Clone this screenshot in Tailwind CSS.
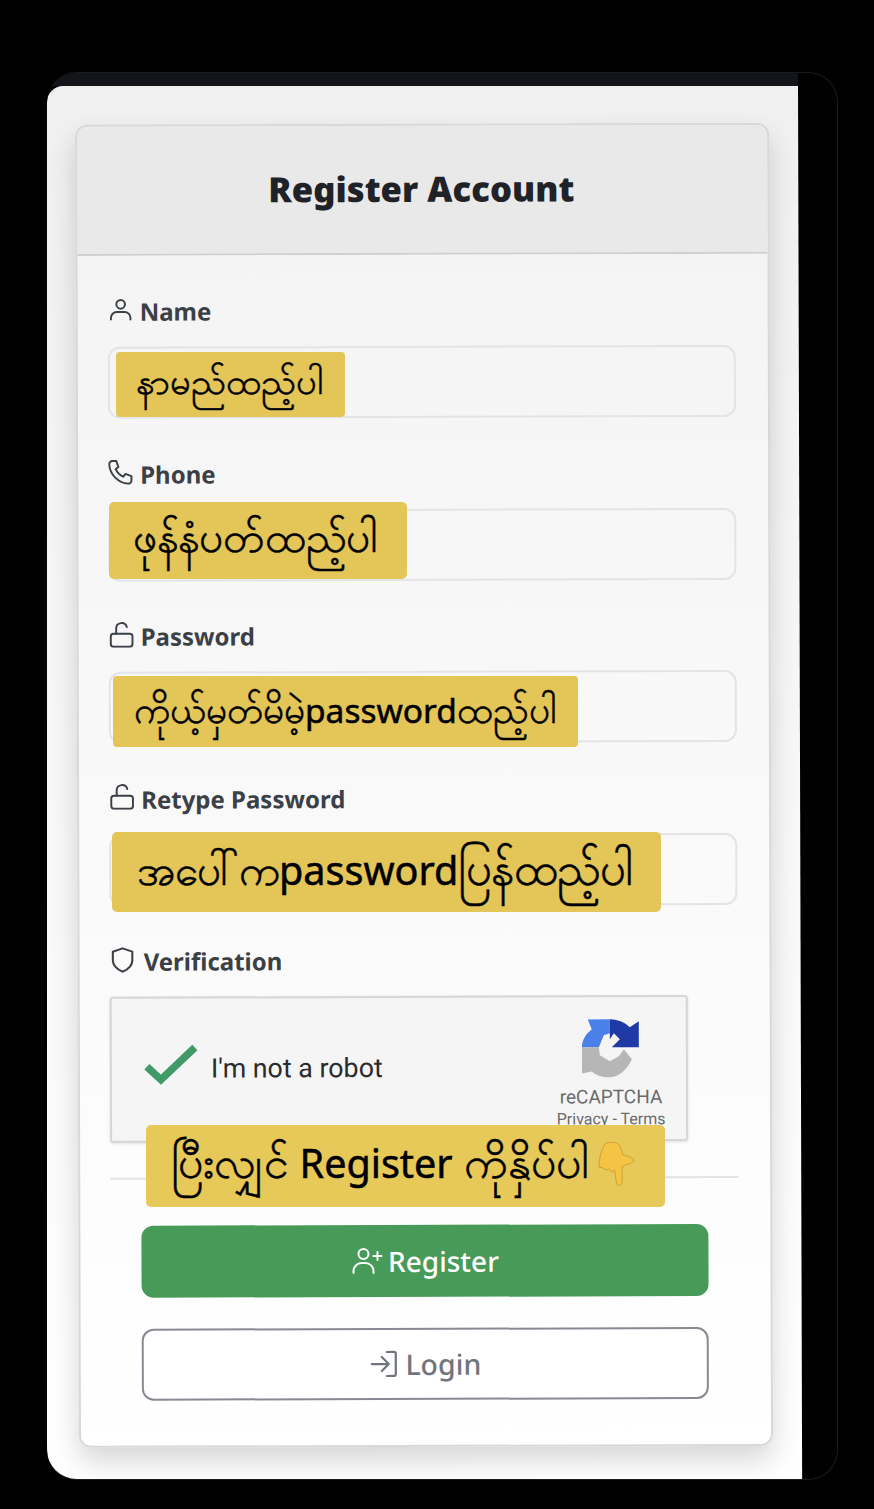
<!DOCTYPE html>
<html lang="my">
  <head>
    <meta charset="UTF-8" />
    <meta name="viewport" content="width=device-width, initial-scale=1.0" />
    <title>Register Account</title>
    <script src="https://cdn.jsdelivr.net/npm/@tailwindcss/browser@4"></script>
  </head>

  <body class="bg-black font-['Noto_Sans',sans-serif]">
    <div class="relative w-[874px] h-[1509px] overflow-hidden bg-black pt-[72px] pl-[47px]">
      <!-- phone frame -->
      <div class="w-[791px] h-[1408px] rounded-[30px] border border-l-0 border-[#1b1c1f] overflow-hidden">
        <div class="h-[13px] w-[751px] bg-[#14151a]"></div>
        <div class="h-[1395px] overflow-hidden rounded-tl-[16px] rounded-bl-[30px]">
          <div class="w-[755px] h-[1400px] ml-[-4px] rotate-[-0.17deg] origin-top-left bg-gradient-to-b from-[#f0f0f0] via-[#f8f8f8] to-white pt-[39px] pl-[32px]">
            <!-- card -->
            <div class="w-[694px] h-[1323px] rounded-[12px] border-2 border-[#d8d8d8] bg-gradient-to-b from-[#f3f3f3] via-[#f9f9f9] to-white shadow-[0_14px_28px_rgba(0,0,0,0.16)]">
              <div class="h-[129px] rounded-t-[10px] bg-[#e9e9e9] border-b-2 border-[#cfcfcf] flex items-center justify-center pr-[2px]">
                <h1 class="text-[34.700px] font-black text-[#1f2328]">Register Account</h1>
              </div>

              <div class="pl-[30px] pr-[32px] pt-[43px]">
                <!-- name -->
                <label class="flex items-center gap-[6px] h-[30px] pb-[4px] mb-[18px] text-[24px] font-bold text-[#3b3f46]">
                  <svg class="w-[26px] h-[26px] mt-[-5px]" viewBox="0 0 24 24" fill="none" stroke="currentColor" stroke-width="1.8" stroke-linecap="round"><circle cx="12" cy="7" r="4" /><path d="M3 21v-1.5A5.5 5.5 0 0 1 8.500 14h7a5.500 5.500 0 0 1 5.500 5.500V21" /></svg>
                  Name
                </label>
                <div class="h-[72px] mb-[42.5px] rounded-[12px] border-2 border-[#e3e4e8]"></div>

                <!-- phone -->
                <label class="flex items-center gap-[6px] h-[30px] pb-[4px] mb-[18px] text-[24px] font-bold text-[#3b3f46]">
                  <svg class="w-[26px] h-[26px] mt-[-5px]" viewBox="0 0 24 24" fill="none" stroke="currentColor" stroke-width="1.8" stroke-linecap="round" stroke-linejoin="round"><path d="M4 2h3.500l2 5.500-2.500 2a13 13 0 0 0 7 7l2-2.500 5.500 2V20a3 3 0 0 1-3 3C9.500 22.500 1.500 14.500 1 5a3 3 0 0 1 3-3z" /></svg>
                  Phone
                </label>
                <div class="h-[72px] mb-[42.5px] rounded-[12px] border-2 border-[#e3e4e8]"></div>

                <!-- password -->
                <label class="flex items-center gap-[6px] h-[30px] pb-[4px] mb-[18px] text-[24px] font-bold text-[#3b3f46]">
                  <svg class="w-[26px] h-[26px] mt-[-5px]" viewBox="0 0 24 24" fill="none" stroke="currentColor" stroke-width="1.8" stroke-linecap="round"><rect x="2" y="11" width="20" height="12" rx="2.500" /><path d="M7 11V6a5 5 0 0 1 9.800-1.200" /></svg>
                  Password
                </label>
                <div class="h-[72px] mb-[42.5px] rounded-[12px] border-2 border-[#e3e4e8]"></div>

                <!-- retype -->
                <label class="flex items-center gap-[6px] h-[30px] pb-[4px] mb-[18px] text-[24px] font-bold text-[#3b3f46]">
                  <svg class="w-[26px] h-[26px] mt-[-5px]" viewBox="0 0 24 24" fill="none" stroke="currentColor" stroke-width="1.8" stroke-linecap="round"><rect x="2" y="11" width="20" height="12" rx="2.500" /><path d="M7 11V6a5 5 0 0 1 9.800-1.200" /></svg>
                  Retype Password
                </label>
                <div class="h-[72px] mb-[42.5px] rounded-[12px] border-2 border-[#e3e4e8]"></div>

                <!-- verification -->
                <label class="flex items-center gap-[8px] h-[30px] pb-[4px] mb-[18px] text-[24px] font-bold text-[#3b3f46]">
                  <svg class="w-[26px] h-[26px] mt-[-4px]" viewBox="0 0 24 24" fill="none" stroke="currentColor" stroke-width="1.9" stroke-linejoin="round"><path d="M12 1.500 21 4.500v8c0 5-4 8.500-9 10.500-5-2-9-5.500-9-10.500v-8z" /></svg>
                  Verification
                </label>

                <!-- recaptcha -->
                <div class="w-[578px] h-[146px] flex items-center justify-between rounded-[3px] border-2 border-[#d6d6d6] bg-[#f5f5f5] shadow-[0_1px_3px_rgba(0,0,0,0.12)] pl-[32px] pr-[21px] font-['Roboto',sans-serif]">
                  <div class="flex items-center gap-[13px] mt-[-2px]">
                    <svg class="w-[54px] h-[42px] mt-[-8px]" viewBox="0 0 54 42" fill="none"><path d="M3 23 17 36 51 4" stroke="#3f9a66" stroke-width="7.500" /></svg>
                    <span class="text-[26.800px] text-[#2b2b2b]">I'm not a robot</span>
                  </div>
                  <div class="flex flex-col items-center w-[108px] mt-[10px]">
                    <svg class="w-[58px] h-[60px] mt-[1px]" viewBox="0 0 58 60">
                      <path fill="#4a80e8" d="M0 29C0 22 4 15 10 11L6 1H28V15L22 17 17 29Z" />
                      <path fill="#1f3aa5" d="M28 1C35 1 43 4 48 9L57 3V29H30L38 21 32 15 28 21Z" />
                      <path fill="#b6b6b6" d="M0 29H17L18 37 28 43 37 38 42 31 50 41C45 52 36 59 28 59 20 59 14 57 10 53L0 55Z" />
                    </svg>
                    <span class="text-[19px] leading-[24px] mt-[7px] text-[#6b6b6b]">reCAPTCHA</span>
                    <span class="text-[16px] leading-[20px] text-[#6b6b6b] whitespace-nowrap">Privacy - Terms</span>
                  </div>
                </div>

                <div class="w-[628px] h-[2px] bg-[#e2e2e2] mt-[35px] mb-[46px]"></div>

                <!-- buttons -->
                <div class="ml-[31px] w-[567px]">
                  <button class="w-full h-[72px] flex items-center justify-center gap-[5px] rounded-[12px] bg-[#479a58] text-white text-[28px] font-medium">
                    <svg class="w-[32px] h-[30px]" viewBox="0 0 32 30" fill="none" stroke="currentColor" stroke-width="2" stroke-linecap="round"><circle cx="12" cy="8" r="5" /><path d="M2 27v-2a8 8 0 0 1 8-8h4a8 8 0 0 1 8 8v2M26 6v8M22 10h8" /></svg>
                    Register
                  </button>
                  <button class="w-full h-[72px] mt-[31px] flex items-center justify-center gap-[8px] rounded-[12px] border-2 border-[#878a92] bg-white text-[#71747c] text-[28.500px] font-medium">
                    <svg class="w-[28px] h-[28px]" viewBox="0 0 28 28" fill="none" stroke="currentColor" stroke-width="2.200" stroke-linecap="round" stroke-linejoin="round"><path d="M17 2h7a2 2 0 0 1 2 2v20a2 2 0 0 1-2 2h-7M2 14h16M12 7l7 7-7 7" /></svg>
                    Login
                  </button>
                </div>
              </div>
            </div>
          </div>
        </div>
      </div>

      <!-- yellow captions over the form -->
      <div class="absolute left-[116px] top-[352px] w-[229px] h-[65px] pb-[8px] rounded-[4px] bg-[#e3c558] flex items-center pl-[20px] text-[36.300px] text-black whitespace-nowrap [-webkit-text-stroke:0.5px_black]">နာမည်ထည့်ပါ</div>
      <div class="absolute left-[109px] top-[502px] w-[298px] h-[77px] pb-[10px] rounded-[5px] bg-[#e3c558] flex items-center pl-[24px] text-[42.400px] text-black whitespace-nowrap [-webkit-text-stroke:0.5px_black]">ဖုန်နံပတ်ထည့်ပါ</div>
      <div class="absolute left-[113px] top-[676px] w-[465px] h-[71px] pb-[6px] rounded-[4px] bg-[#e3c558] flex items-center pl-[21px] text-[37px] text-black whitespace-nowrap [-webkit-text-stroke:0.5px_black]">
        <span>ကိုယ့်မှတ်မိမဲ့<span class="text-[33.500px]">password</span>ထည့်ပါ</span>
      </div>
      <div class="absolute left-[112px] top-[832px] w-[549px] h-[80px] pb-[10px] rounded-[5px] bg-[#e3c558] flex items-center pl-[25px] text-[42px] text-black whitespace-nowrap [-webkit-text-stroke:0.5px_black]">
        <span>အပေါ်က<span class="text-[39.600px]">password</span><span class="text-[45.500px]">ပြန်ထည့်ပါ</span></span>
      </div>
      <div class="absolute left-[146px] top-[1125px] w-[519px] h-[82px] pb-[10px] rounded-[5px] bg-[#e7c95a] flex items-center pl-[25px] text-[44.500px] text-black whitespace-nowrap [-webkit-text-stroke:0.5px_black]">
        <span>ပြီးလျှင် <span class="text-[39.500px]">Register</span> ကိုနှိပ်ပါ</span>
        <svg class="w-[55px] h-[60px] mt-[10px] shrink-0" viewBox="0 0 55 60" fill="#f4c445" stroke="#c8982f" stroke-width="0.800"><path d="M16 8C22 5 28 6 31 10L34 19C38 20 42 21 44 23 46 26 42 28 36 29L33 31 33 47C32 50 28 50 27.500 47L25.500 34 23 36 20 33 17 34 14 32 10 31C10 24 12 14 16 8Z" /></svg>
      </div>
    </div>
  </body>
</html>
